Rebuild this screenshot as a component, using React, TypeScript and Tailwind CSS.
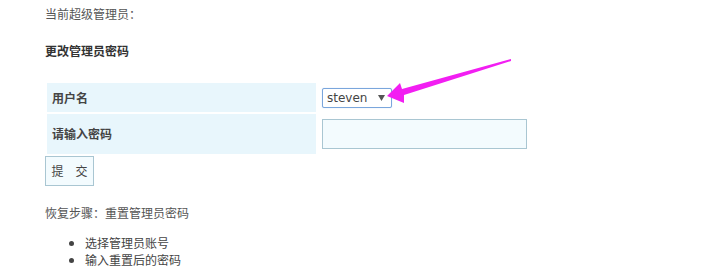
import React from "react";

export default function App() {
  const cjk = { fontFamily: '"Noto Sans CJK SC", "Noto Sans", sans-serif' };
  return (
    <div className="relative w-[705px] h-[267px] bg-white overflow-hidden text-[12px] text-[#555]" style={cjk}>
      <div className="pl-[45px] pt-[5px]">
        <div className="leading-[18px]">当前超级管理员：</div>
        <div className="mt-[19px] leading-[18px] font-bold text-[#333]">更改管理员密码</div>
        <table className="mt-[21px] border-separate border-spacing-[2px]">
          <tbody>
            <tr>
              <td className="w-[269px] h-[29px] bg-[#e8f6fc] p-0 pl-[5px] font-bold text-[#444] align-middle">用户名</td>
              <td className="p-0 pl-[4px] align-middle">
                <div className="flex items-center w-[70px] h-[20px] border border-[#7aa6dc] rounded-[2px] bg-white pl-[4px] pr-[6px] shadow-[0_0_1px_#a8c8ee]">
                  <span className="text-[12px] text-[#444] leading-none" style={{ fontFamily: '"DejaVu Sans", sans-serif' }}>steven</span>
                  <svg className="ml-auto" width="7" height="6" viewBox="0 0 7 6">
                    <polygon points="0,0 7,0 3.5,6" fill="#555" />
                  </svg>
                </div>
              </td>
            </tr>
            <tr>
              <td className="w-[269px] h-[40px] bg-[#e8f6fc] p-0 pl-[5px] font-bold text-[#444] align-middle">请输入密码</td>
              <td className="p-0 pl-[4px] align-middle">
                <div className="w-[205px] h-[30px] border border-[#a9c6d2] bg-[#f3fbfe]" />
              </td>
            </tr>
          </tbody>
        </table>
        <button className="block w-[49px] h-[30px] border border-[#a9c6d2] bg-[#f3fbfe] text-[#444] text-[12px] leading-[28px] text-center">提　交</button>
        <div className="mt-[18px] leading-[18px]">恢复步骤：重置管理员密码</div>
        <ul className="mt-[12px] list-disc pl-[40px] leading-[17px] text-[#444]">
          <li>选择管理员账号</li>
          <li>输入重置后的密码</li>
        </ul>
      </div>
      <svg className="absolute left-0 top-0 pointer-events-none" width="705" height="267">
        <polygon
          points="511,59 402,89 400,83 387,96 404,103 404,95 511,61"
          fill="#f21ef2"
        />
      </svg>
    </div>
  );
}
